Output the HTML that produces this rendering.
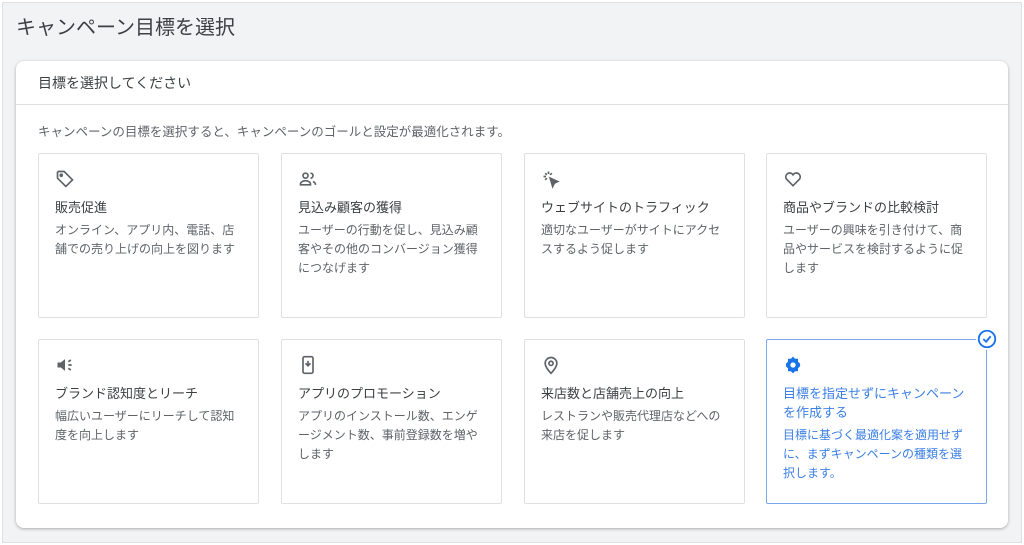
<!DOCTYPE html>
<html><head><meta charset="utf-8"><style>
*{box-sizing:border-box;margin:0;padding:0}
body{width:1024px;height:545px;background:#fff;font-family:"Liberation Sans","Noto Sans CJK JP",sans-serif;overflow:hidden;position:relative}
.bg{position:absolute;left:2px;top:2px;width:1020px;height:541px;background:#f1f3f4;border:1px solid #e0e0e0}
h1{position:absolute;left:16px;top:11px;font-size:20px;font-weight:400;color:#3c4043}
.main{position:absolute;left:16px;top:61px;width:992px;height:467px;background:#fff;border-radius:8px;box-shadow:0 1px 3px rgba(0,0,0,.3)}
.hd{height:44px;border-bottom:1px solid #e0e0e0;padding:12px 22px;font-size:14px;color:#3c4043}
.sub{position:absolute;left:22px;top:60px;font-size:12.5px;color:#5f6368}
.c{position:absolute;width:221px;height:165px;border:1px solid #e0e0e0;border-radius:2px;padding:15px 16px;background:#fff}
.c svg{display:block;width:20px;height:20px;margin-bottom:9px}
.t{font-size:13px;color:#3c4043;line-height:19px;margin-bottom:4px}
.d{font-size:12px;color:#5f6368;line-height:19px}
.sel{border:1.5px solid #7aa7e8}
.sel .t,.sel .d{color:#3b7fe6}
.chk{position:absolute;right:-12px;top:-12px;width:22px;height:22px;background:#fff;border-radius:50%}
</style></head><body>
<div class="bg"></div>
<h1>キャンペーン目標を選択</h1>
<div class="main">
<div class="hd">目標を選択してください</div>
<div class="sub">キャンペーンの目標を選択すると、キャンペーンのゴールと設定が最適化されます。</div>

<div class="c" style="left:22px;top:92px"><svg viewBox="0 0 24 24" fill="none" stroke="#5f6368" stroke-width="2"><path d="M3 4v7l10 10 8-8L11 3H4z"/><circle cx="7.5" cy="7.5" r="1.2" fill="#5f6368"/></svg><div class="t">販売促進</div><div class="d">オンライン、アプリ内、電話、店舗での売り上げの向上を図ります</div></div>
<div class="c" style="left:265px;top:92px"><svg viewBox="0 0 24 24" fill="none" stroke="#5f6368" stroke-width="2"><circle cx="9" cy="8" r="3"/><path d="M3 19v-1c0-2 3-4 6-4s6 2 6 4v1z"/><path d="M15 5a3 3 0 010 6M18 15c2 1 3 2 3 4"/></svg><div class="t">見込み顧客の獲得</div><div class="d">ユーザーの行動を促し、見込み顧客やその他のコンバージョン獲得につなげます</div></div>
<div class="c" style="left:508px;top:92px"><svg viewBox="0 0 24 24" fill="none" stroke="#5f6368" stroke-width="2"><path d="M11 11l3 10 2-4 4-2z" fill="#5f6368"/><path d="M9 3v3M3 9h3M5 5l2 2M13 5l-2 2M5 13l2-2"/></svg><div class="t">ウェブサイトのトラフィック</div><div class="d">適切なユーザーがサイトにアクセスするよう促します</div></div>
<div class="c" style="left:750px;top:92px"><svg viewBox="0 0 24 24" fill="none" stroke="#5f6368" stroke-width="2"><path d="M12 20l-8-8a4.5 4.5 0 018-5 4.5 4.5 0 018 5z"/></svg><div class="t">商品やブランドの比較検討</div><div class="d">ユーザーの興味を引き付けて、商品やサービスを検討するように促します</div></div>

<div class="c" style="left:22px;top:278px"><svg viewBox="0 0 24 24" fill="#5f6368"><path d="M3 9h4l5-4v14l-5-4H3z"/><path d="M16 8l3-2M16 12h4M16 16l3 2" stroke="#5f6368" stroke-width="2"/></svg><div class="t">ブランド認知度とリーチ</div><div class="d">幅広いユーザーにリーチして認知度を向上します</div></div>
<div class="c" style="left:265px;top:278px"><svg viewBox="0 0 24 24" fill="none" stroke="#5f6368" stroke-width="2"><rect x="6" y="2" width="12" height="20" rx="2"/><path d="M12 7v6M9 10l3 3 3-3"/></svg><div class="t">アプリのプロモーション</div><div class="d">アプリのインストール数、エンゲージメント数、事前登録数を増やします</div></div>
<div class="c" style="left:508px;top:278px"><svg viewBox="0 0 24 24" fill="none" stroke="#5f6368" stroke-width="2"><path d="M12 22s-7-7-7-12a7 7 0 0114 0c0 5-7 12-7 12z"/><circle cx="12" cy="10" r="2.5"/></svg><div class="t">来店数と店舗売上の向上</div><div class="d">レストランや販売代理店などへの来店を促します</div></div>
<div class="c sel" style="left:750px;top:278px"><div class="chk"><svg viewBox="0 0 24 24" style="width:22px;height:22px" fill="none" stroke="#1a73e8" stroke-width="2"><circle cx="12" cy="12" r="9"/><path d="M8 12l3 3 5-6"/></svg></div><svg viewBox="0 0 24 24" fill="#1a73e8"><path d="M12 2l2.5 2.5H18V8l2.5 2.5v3L18 16v3.5h-3.5L12 22l-2.5-2.5H6V16l-2.5-2.5v-3L6 8V4.5h3.5z"/><circle cx="12" cy="12" r="3.2" fill="#fff"/></svg><div class="t">目標を指定せずにキャンペーンを作成する</div><div class="d">目標に基づく最適化案を適用せずに、まずキャンペーンの種類を選択します。</div></div>
</div>
</body></html>
